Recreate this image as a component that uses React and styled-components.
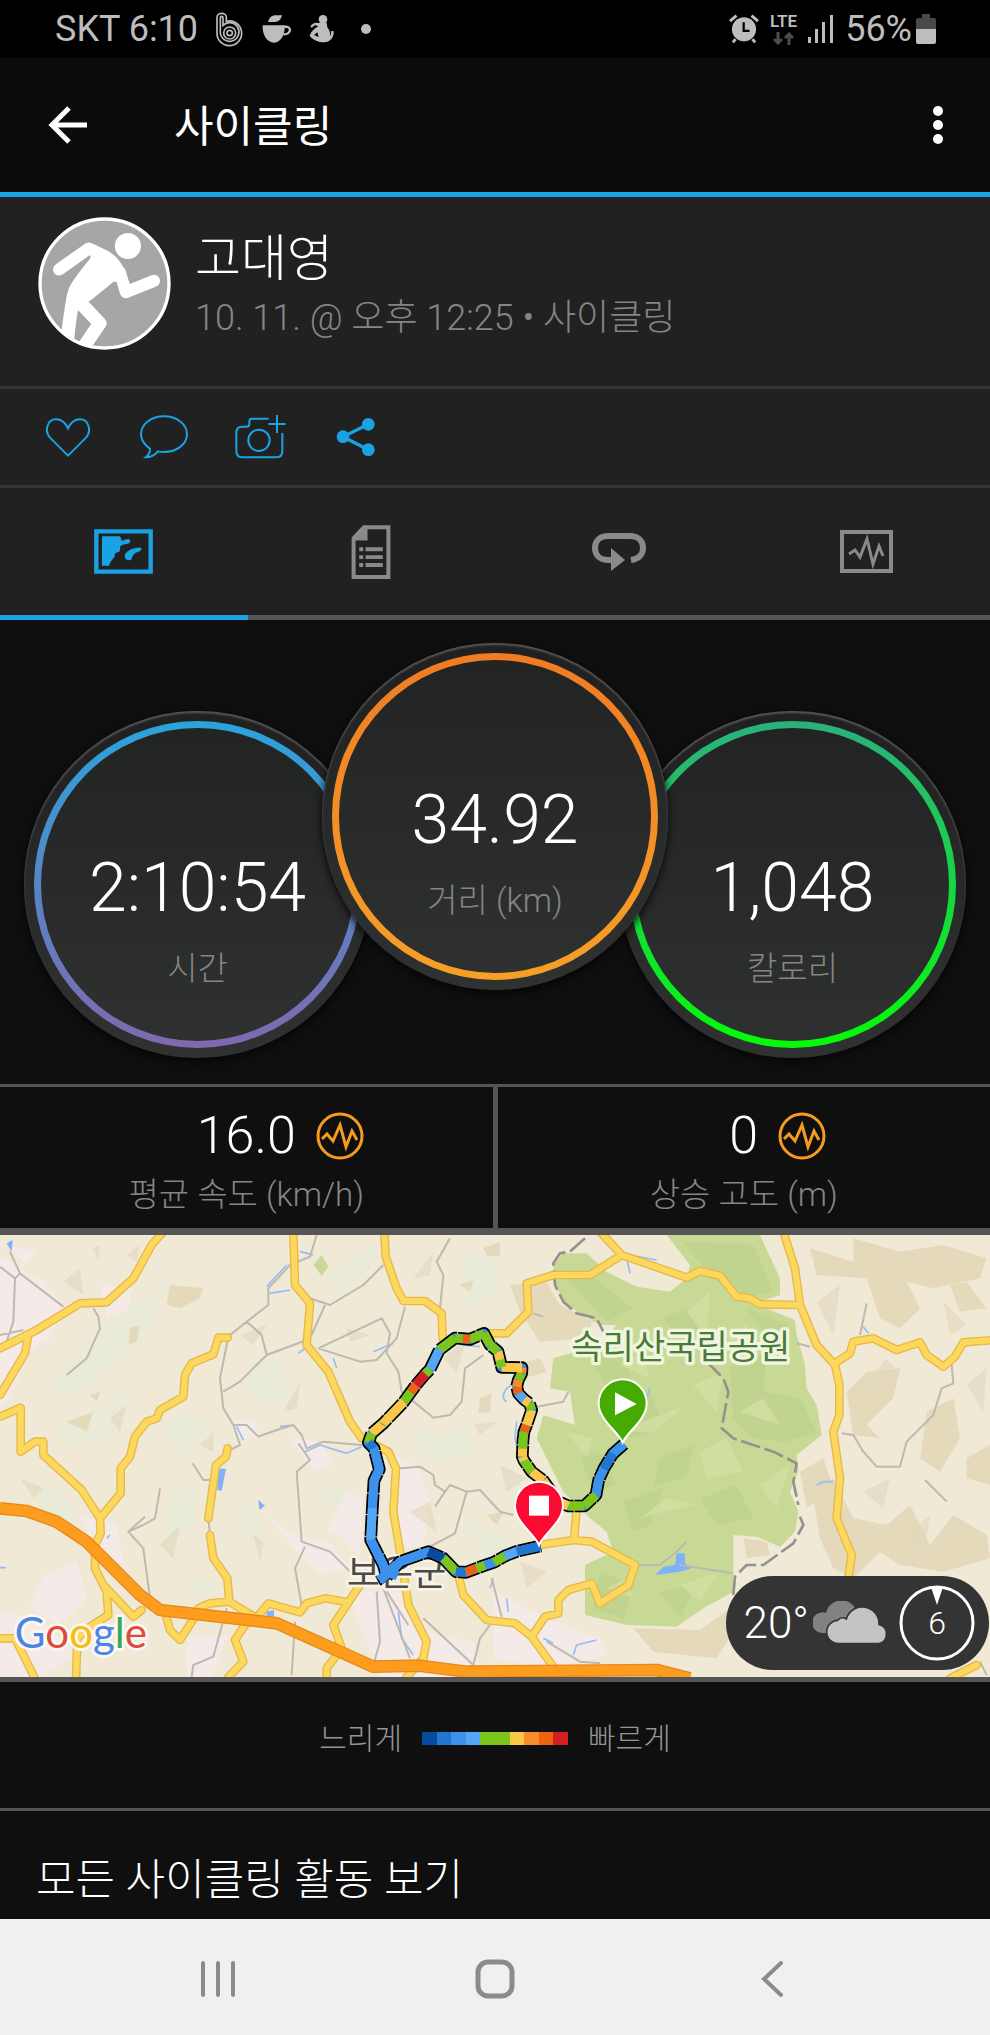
import React from "react"
import styled, { createGlobalStyle, css } from "styled-components"

const colors = {
  accent: "#1aa3e4",
  panel: "#212121",
  page: "#0f0f0f",
  line: "#363636",
  rule: "#555555",
  muted: "#858585",
  status: "#bdbdbd",
  orange: "#f49b21",
}

const GlobalStyle = createGlobalStyle`
  * {
    box-sizing: border-box;
  }
  body {
    margin: 0;
    background: ${colors.page};
    color: #fff;
    font-family: Roboto, "Noto Sans CJK KR", sans-serif;
    font-weight: 300;
  }
  button {
    display: flex;
    align-items: center;
    justify-content: center;
    padding: 0;
    border: 0;
    background: none;
    color: inherit;
    font: inherit;
  }
  svg {
    display: block;
    flex: none;
  }
  h1, h2, p, ul {
    margin: 0;
    padding: 0;
  }
`

const StatusBar = styled.div`
  display: flex;
  align-items: center;
  justify-content: space-between;
  height: 58px;
  padding: 0 54px 0 55px;
  background: #000;
  color: ${colors.status};
  font-size: 36px;
  font-weight: 400;
  line-height: 60px;
`

const StatusGroup = styled.div`
  display: flex;
  align-items: center;
  gap: ${props => props.$gap}px;
`

const Network = styled.span`
  display: flex;
  flex-direction: column;
  align-items: center;
  gap: 4px;
  font-size: 17px;
  font-weight: 600;
  line-height: 14px;
`

const Charge = styled.span`
  display: flex;
  align-items: center;
  gap: 4px;
`

const AppBar = styled.header`
  display: flex;
  align-items: center;
  height: 139px;
  padding: 0 44px;
  border-bottom: 5px solid ${colors.accent};
  background: #0b0b0b;
`

const Title = styled.h1`
  flex: 1;
  margin-left: 82px;
  padding-top: 3px;
  font-size: 43px;
  font-weight: 400;
  line-height: 60px;
`

const Profile = styled.section`
  display: flex;
  gap: 24px;
  height: 192px;
  padding: 20px 38px;
  border-bottom: 3px solid ${colors.line};
  background: ${colors.panel};
`

const ProfileText = styled.div`
  display: flex;
  flex-direction: column;
  gap: 2px;
  padding-top: 9px;
`

const Name = styled.h2`
  font-size: 50px;
  font-weight: 300;
  line-height: 66px;
`

const Meta = styled.p`
  color: ${colors.muted};
  font-size: 36px;
  line-height: 48px;
`

const Actions = styled.div`
  display: flex;
  align-items: center;
  gap: 44px;
  height: 99px;
  padding: 0 42px;
  border-bottom: 3px solid ${colors.line};
  background: ${colors.panel};
  color: ${colors.accent};
`

const Action = styled.button`
  width: 52px;
  height: 60px;
`

const Tabs = styled.div`
  display: flex;
  background: ${colors.panel};
`

const Tab = styled.button`
  && {
    flex: 1;
    height: 132px;
    border-bottom: 5px solid ${colors.rule};
    color: #8a8a8a;
    ${props => props.$active
      && css`
        border-bottom-color: ${colors.accent};
        color: ${colors.accent};
      `}
  }
`

const Dials = styled.section`
  display: flex;
  align-items: flex-end;
  justify-content: center;
  padding: 23px 0 26px;
`

const Dial = styled.div`
  position: relative;
  z-index: ${props => (props.$raised ? 1 : 0)};
  flex: 0 0 35%;
  margin: ${props => (props.$raised ? "0 -49px 68px" : "0")};
  padding: 10px;
  border-radius: 50%;
  background: linear-gradient(#202020, #303232);
  box-shadow: inset 0 2px 2px #5a5656, 0 3px 8px #050505;
`

const Ring = styled.div`
  padding: 7px;
  border-radius: 50%;
  background: linear-gradient(${props => props.$from}, ${props => props.$to});
`

const Face = styled.div`
  display: flex;
  flex-direction: column;
  align-items: center;
  gap: 20px;
  aspect-ratio: 1;
  padding-top: 38%;
  border-radius: 50%;
  background: linear-gradient(#222323, #2f3131);
`

const DialValue = styled.span`
  font-size: 68px;
  line-height: 82px;
`

const Label = styled.span`
  color: ${colors.muted};
  font-size: 33px;
  line-height: 40px;
`

const Stats = styled.section`
  display: flex;
  border-top: 3px solid ${colors.rule};
  border-bottom: 7px solid ${colors.rule};
`

const Stat = styled.div`
  display: flex;
  flex: 1;
  flex-direction: column;
  align-items: center;
  gap: 9px;
  height: 141px;
  padding-top: 19px;
  & + & {
    border-left: 5px solid ${colors.rule};
  }
`

const StatValue = styled.div`
  display: grid;
  grid-template-columns: 1fr auto 1fr;
  align-items: center;
  gap: 20px;
  width: 100%;
  font-size: 52px;
  line-height: 60px;
  svg {
    grid-column: 3;
  }
  span {
    grid-column: 2;
  }
`

const MapPanel = styled.section`
  position: relative;
  border-bottom: 5px solid ${colors.rule};
`

const MapSvg = styled.svg`
  width: 100%;
  height: auto;
`

const Weather = styled.div`
  position: absolute;
  right: 1px;
  bottom: 7px;
  display: flex;
  align-items: center;
  gap: 4px;
  height: 94px;
  padding: 0 14px 0 18px;
  border-radius: 47px;
  background: #343434;
  font-size: 44px;
  line-height: 60px;
`

const Wind = styled.span`
  display: grid;
  place-items: center;
  margin-left: 6px;
  font-size: 32px;
  svg, b {
    grid-area: 1 / 1;
  }
  b {
    font-weight: 300;
  }
`

const Legend = styled.section`
  display: flex;
  align-items: flex-start;
  justify-content: center;
  gap: 20px;
  height: 129px;
  padding-top: 37px;
  border-bottom: 3px solid ${colors.rule};
  color: #959595;
  font-size: 30px;
  line-height: 40px;
`

const Scale = styled.ul`
  display: flex;
  width: 146px;
  margin-top: 13px;
  list-style: none;
`

const Swatch = styled.li`
  flex: 1;
  height: 13px;
  background: ${props => props.$color};
`

const AllActivities = styled.a`
  display: block;
  height: 108px;
  padding: 39px 36px 9px;
  color: #fff;
  font-size: 43px;
  line-height: 60px;
  text-decoration: none;
`

const NavBar = styled.nav`
  display: grid;
  grid-template-columns: repeat(3, 1fr);
  height: 116px;
  padding: 5px 8% 0;
  background: #f0f0f0;
  color: #8b8b8b;
`

// status bar icons

const SwirlIcon = () => (
  <svg width="30" height="36" viewBox="643 32 90 108" fill="none" stroke="currentColor" strokeWidth="5">
    <path d="M649 98V51c0-16 28-16 28 0v12a37 37 0 1 1-28 35" />
    <path d="M659 98V52c0-5 8-5 8 0v23a28 28 0 1 1-8 23" />
    <circle cx="687" cy="98" r="18" />
    <circle cx="687" cy="98" r="8" />
  </svg>
)

const CupIcon = () => (
  <svg width="30" height="30" viewBox="784 42 90 90" fill="currentColor">
    <path d="M802 66c4-14 12-20 22-20h20c-4 14-10 20-22 20zM786 76h66c2 24-10 52-32 52s-36-26-34-52z" />
    <path d="M850 81c24-6 24 24-2 22" fill="none" stroke="currentColor" strokeWidth="7" />
  </svg>
)

const FigureIcon = () => (
  <svg width="26" height="30" viewBox="925 44 78 90" fill="currentColor">
    <circle cx="967" cy="60" r="13" />
    <path d="M958 70h20l2 14c8 10 10 20 8 26 4-2 4-8 3-14l8-1c2 18-10 34-30 34-16 0-34-8-42-20 4-12 14-22 26-28l-10-4-10 8-4-4c6-8 14-12 20-10zM940 107l14 6-4-14z" fillRule="evenodd" />
  </svg>
)

const AlarmIcon = () => (
  <svg width="30" height="30" viewBox="674 42 92 90">
    <circle cx="720" cy="88" r="37" fill="currentColor" />
    <path d="M677 63l20-17M763 63l-20-17M694 118l-8 10M746 118l8 10" stroke="currentColor" strokeWidth="9" />
    <path d="M719 66v27h18" fill="none" stroke="#000" strokeWidth="7" />
  </svg>
)

const DataIcon = () => (
  <svg width="21" height="13" viewBox="0 0 21 13" fill="none" stroke="#4c4c4c" strokeWidth="3">
    <path d="M5 0v11M1 7l4 4 4-4M16 13V2M12 6l4-4 4 4" />
  </svg>
)

const SignalIcon = () => (
  <svg width="26" height="28" viewBox="0 0 26 28" fill="currentColor">
    <path d="M0 22h3v6H0zM7 14h3v14H7zM14 7h3v21h-3zM22 0h3v28h-3z" />
  </svg>
)

const BatteryIcon = () => (
  <svg width="20" height="30" viewBox="0 0 20 30">
    <path d="M6 0h8v4h4q2 0 2 2v9H0V6q0-2 2-2h4z" fill="#4a4a4a" />
    <path d="M0 15h20v13q0 2-2 2H2q-2 0-2-2z" fill="currentColor" />
  </svg>
)

const Dot = () => (
  <svg width="10" height="10" viewBox="0 0 10 10" fill="currentColor">
    <circle cx="5" cy="5" r="5" />
  </svg>
)

// app icons

const BackIcon = () => (
  <svg width="48" height="48" viewBox="0 0 48 48" fill="none" stroke="#fff" strokeWidth="5">
    <path d="M43 24H9M25 7L8 24l17 17" />
  </svg>
)

const MoreIcon = () => (
  <svg width="16" height="40" viewBox="0 0 16 40" fill="#fff">
    <circle cx="8" cy="6" r="5" />
    <circle cx="8" cy="20" r="5" />
    <circle cx="8" cy="34" r="5" />
  </svg>
)

const Avatar = () => (
  <svg width="133" height="133" viewBox="115 50 398 398" role="img" aria-label="프로필">
    <clipPath id="avatarClip">
      <circle cx="314" cy="249" r="193" />
    </clipPath>
    <circle cx="314" cy="249" r="193" fill="#a6a6a6" />
    <g clipPath="url(#avatarClip)" fill="#fff" stroke="#fff" strokeLinecap="round" strokeLinejoin="round">
      <circle cx="384" cy="137" r="39" stroke="none" />
      <path d="M257 129q12-5 24 2l42 20q32 17 48 52 12 22 12 42l-42-1-66 54-50 30-28-10q2-40 16-66 20-32 60-80z" stroke="none" />
      <path d="M178 207l88-62M360 215l18 60 84-34" fill="none" strokeWidth="36" />
      <path d="M224 280q-14 60-20 130M240 305l60 63-48 70" fill="none" strokeWidth="40" />
    </g>
    <circle cx="314" cy="249" r="193" fill="none" stroke="#fff" strokeWidth="10" />
  </svg>
)

const HeartIcon = () => (
  <svg width="46" height="42" viewBox="133 645 138 126" fill="none" stroke="currentColor" strokeWidth="6">
    <path d="M202 764l-54-54c-18-20-8-55 18-55 18 0 28 10 36 27 8-17 18-27 36-27 26 0 36 35 18 55z" />
  </svg>
)

const CommentIcon = () => (
  <svg width="50" height="46" viewBox="416 641 150 138" fill="none" stroke="currentColor" strokeWidth="6">
    <path d="M449 745c-16-11-27-26-27-43 0-30 31-54 69-54s69 24 69 54-31 53-69 53c-6 0-12 0-18-2-10 12-22 18-37 18 8-6 13-14 13-26z" />
  </svg>
)

const CameraIcon = () => (
  <svg width="52" height="46" viewBox="704 646 156 138" fill="none" stroke="currentColor" strokeWidth="6">
    <path d="M808 660h-50q-8 0-8 8v8q0 8-8 8h-14q-17 0-17 17v57q0 18 18 18h102q18 0 18-18v-55M833 649v54M807 676h52" />
    <circle cx="779" cy="725" r="32" />
  </svg>
)

const ShareIcon = () => (
  <svg width="40" height="40" viewBox="1008 650 120 120" fill="currentColor" stroke="currentColor">
    <path d="M1105 672l-76 37 76 39" fill="none" strokeWidth="10" />
    <circle cx="1105" cy="672" r="19" stroke="none" />
    <circle cx="1029" cy="709" r="19" stroke="none" />
    <circle cx="1105" cy="748" r="19" stroke="none" />
  </svg>
)

const MapIcon = () => (
  <svg width="59" height="45" viewBox="284 988 177 135" fill="currentColor">
    <path d="M291 995h163v121H291z" fill="none" stroke="currentColor" strokeWidth="13" />
    <path d="M308 1010h54l6 14q18-10 24-4 4 10-10 13-14 0-20 8 2 8-2 15-12 2-14 8 2 8-4 12l-8 10q-4 4-4 12H308z" />
    <path d="M385 1055q10-9 25-10 17-5 17 5-7 6-17 9-12 7-14 21-16 5-20-8 1-12 9-17z" />
  </svg>
)

const DocIcon = () => (
  <svg width="40" height="54" viewBox="1054 974 119 163" fill="currentColor">
    <path d="M1061 1014v117h105V981h-74z" fill="none" stroke="currentColor" strokeWidth="12" />
    <path d="M1060 1014l32-34h11v41h-43zM1078 1041h12v12h-12zM1097 1041h52v12h-52zM1078 1065h12v12h-12zM1097 1065h52v12h-52zM1078 1089h12v12h-12zM1097 1089h52v12h-52z" />
  </svg>
)

const LapIcon = () => (
  <svg width="54" height="38" viewBox="592 538 54 38">
    <path d="M631 565c8-1 12-6 12-12 0-8-6-12-13-12h-22c-7 0-13 4-13 12s6 12 13 12h5" fill="none" stroke="currentColor" strokeWidth="6" />
    <path d="M611 553l14 12-14 11z" fill="currentColor" />
  </svg>
)

const ChartIcon = () => (
  <svg width="53" height="44" viewBox="840 530 53 44" fill="none" stroke="currentColor">
    <path d="M842 532h49v39h-49z" strokeWidth="4" />
    <path d="M849 554l6-4 5 7 7-18 6 25 6-18 4 10" strokeWidth="3" />
  </svg>
)

const PulseIcon = () => (
  <svg width="48" height="48" viewBox="315 1110 48 48" fill="none" stroke={colors.orange} strokeWidth="3">
    <circle cx="339" cy="1134" r="22" />
    <path d="M321 1137l5-5 6 7 7-16 6 22 6-16 5 9" />
  </svg>
)

const CloudIcon = () => (
  <svg width="76" height="44" viewBox="962 1124 228 132">
    <path d="M993 1220a31 31 0 1 1 8-60 48 48 0 0 1 92-6v66z" fill="#828282" />
    <path d="M1040 1252a34 34 0 0 1-4-70 20 20 0 0 1 26-4 50 50 0 0 1 98 16 30 30 0 0 1 0 58z" fill="#c4c4c4" stroke="#343434" strokeWidth="5" />
  </svg>
)

const CompassIcon = () => (
  <svg width="76" height="76" viewBox="0 0 76 76">
    <circle cx="38" cy="38" r="36" fill="none" stroke="#fff" strokeWidth="3" />
    <path d="M32 2h12l-6 18z" fill="#fff" />
  </svg>
)

// map data, three units to a pixel

const majorRoads = [
  "M490 20L455 60 400 160 320 232 240 235 110 315 0 370",
  "M85 330L75 385 0 510",
  "M880 20L885 180 930 235 920 360 985 440 1050 590 1085 640 1165 680 1188 730 1180 860 1205 1010 1225 1140 1280 1250 1270 1300 1220 1356",
  "M1153 20L1157 95 1190 190 1210 228 1275 228 1325 265 1328 340",
  "M683 338L655 338 640 388 575 415 555 450 550 515 480 555 470 580 440 590 405 635 390 695 362 730 362 805 300 880 302 925 285 960 285 1030 320 1100 325 1170 270 1205 232 1240 228 1360",
  "M0 575L62 548 62 680 105 650 130 650 130 690 245 795 300 880",
  "M683 670L678 695 648 720 625 880",
  "M630 930L640 1000 682 1060 688 1130 770 1180",
  "M595 1150L630 1135 688 1130",
  "M0 1240L45 1240 105 1360",
  "M310 1080L400 1175 425 1155",
  "M500 1180L510 1215 540 1245 595 1160",
  "M765 1185L805 1135 900 1162 920 1135 975 1120 1035 1130",
  "M1080 1080L1000 1200 1025 1270 980 1330 980 1360",
  "M735 1200L705 1245 730 1310 685 1356",
  "M1375 1050L1390 1110 1460 1185 1545 1195 1595 1235 1660 1325",
  "M1400 340L1460 325 1520 325 1585 260 1580 175 1660 150 1770 150 1865 90 2060 158 2100 138 2160 152 2210 215 2250 220 2280 238 2400 240",
  "M1800 20L1865 90",
  "M2350 20L2385 130 2400 240 2450 360 2505 420 2518 480 2518 570 2500 620 2520 760 2510 880 2555 990 2545 1060",
  "M2505 415L2550 385 2560 350 2620 340 2690 375 2760 352 2780 390 2830 425 2865 395 2890 352 2980 345",
  "M1730 850L1722 945 1775 950 1905 1020 1885 1080 1800 1135 1775 1075 1705 1095 1675 1125 1675 1165 1635 1175 1595 1235",
  "M1722 945L1620 960",
  "M2930 1320L2850 1360",
]

const highway = "M0 850L80 858 170 890 260 950 420 1110 480 1155 830 1195 1120 1325 1260 1322 1400 1340 1970 1335 2070 1360"

const minorRoads = [
  "M0 125L45 160 60 145 190 245M60 145L30 80M45 160L40 290 20 350M200 450L260 400 300 310 295 275 280 250M0 330L70 315",
  "M690 330L740 290 805 240 805 190 870 120 930 95 950 30M740 290L785 330 800 390 720 470 670 500M800 390L920 345",
  "M683 345L660 460 670 550 700 600 740 600 775 635 830 615 880 600 905 630 920 670 970 650 1085 660M700 600L720 660 680 680",
  "M900 210L990 240 1090 180 1150 120M975 240L935 330M955 370L1145 280 1170 325 1160 385 1195 440 1205 500 1300 578 1350 570 1385 530 1395 430 1450 390",
  "M955 370L1080 410 1130 405 1190 340 1215 245M1320 250L1330 150 1310 110 1350 40",
  "M895 655L930 705 890 740 905 950 990 980 1050 1040M915 965L885 1030 905 1140M578 715L610 765 630 765",
  "M480 790L465 880 430 900 385 920 430 970 450 1120M435 875L385 920M625 880L630 930",
  "M680 1150L640 1295 580 1320 575 1356M885 1190L875 1350M1200 730L1260 725 1300 750 1305 780 1335 800 1305 845M1335 800L1350 780 1400 800 1365 925 1290 965M1400 800L1440 795 1500 860 1540 870",
  "M1130 1100L1140 1250 1120 1320M1150 1090L1230 1300M1270 1180L1420 1320M1160 1100L1225 1200M1475 1060L1505 1175",
  "M1610 545L1690 530 1705 500M1915 1020L1980 1020 2030 980 2060 950M2040 1020L2200 1045",
  "M2525 625L2560 630 2590 680 2630 725 2700 725 2720 650 2800 570 2825 490 2860 475 2855 420M2775 765L2840 830M2580 330L2600 235M2390 355L2430 365M1600 265L1630 275",
  "M1640 1250L1740 1310 1800 1315M2940 1310L2960 1350M1420 1320L1440 1240 1470 1200",
]

const parkBorder = "M1755 40L1710 80 1680 85 1660 115 1665 180 1690 230 1730 265 1790 280 1810 320M2120 410L2170 460 2185 500 2165 610 2200 640 2320 680 2390 715 2380 770 2395 840M2400 875L2410 900 2380 955 2290 1020 2240 1020 2205 1055 2200 1110"

const pinkAreas = "M0 90L60 130 130 170 190 240 150 340 90 380 30 520 0 540zM300 180L400 190 380 260 320 280zM20 60L110 80 80 120zM690 590L760 580 780 640 710 640zM870 640L960 650 1000 720 940 740zM800 870L880 930 1000 960 1050 1030 960 1050 900 990zM1180 690L1250 720 1290 830 1270 960 1200 970zM1040 800L1090 820 1080 1000 1020 930 980 920zM240 870L350 900 370 1010 310 1020zM130 1050L230 1010 260 1120 180 1200 90 1150zM0 1160L120 1180 230 1290 120 1356 0 1356zM1040 1100L1200 1100 1300 1230 1420 1250 1450 1356 1140 1356zM1480 1100L1640 1180 1800 1240 1820 1290 1660 1330 1480 1300zM560 1240L680 1230 640 1356 560 1356z"

const hazeAreas = "M150 460L300 300 400 250 520 130 440 330 330 420 210 520zM160 600L300 560 380 480 330 640 200 660zM480 620L560 560 640 600 560 700zM740 420L840 400 870 520 760 540zM980 150L1130 60 1110 130 1010 210zM1220 600L1330 640 1400 590 1420 680 1290 720zM100 770L210 820 230 900 130 860zM510 800L590 780 580 900 500 960zM700 800L770 860 800 980 720 900zM940 820L1010 760 1060 860zM1400 880L1540 960 1450 1000zM560 1040L650 1080 600 1120zM1380 100L1490 60 1500 200 1400 250z"

const tanAreas = "M510 180L610 190 600 220 540 250 500 240zM390 310L420 300 410 350 385 360zM200 590L280 560 260 620zM270 510L300 500 290 530zM1450 70L1500 50 1500 95 1460 90zM1440 520L1475 505 1470 560 1435 565zM1460 870L1510 860 1490 900zM1380 180L1420 165 1410 200zM1530 180L1640 170 1680 240 1780 290 1750 340 1620 350 1560 260zM1540 420L1620 400 1640 440 1570 460zM2430 70L2560 110 2560 40 2700 80 2830 60 2960 100 2940 160 2800 190 2720 170 2760 250 2700 310 2640 280 2600 160 2450 150zM2850 180L2900 170 2960 250 2880 260zM2540 500L2600 440 2700 430 2680 520 2600 600 2640 640 2560 630zM2440 820L2500 760 2560 880 2660 900 2730 840 2790 960 2860 870 2960 930 2970 1000 2830 1040 2700 1020 2640 980 2560 1060 2500 1030 2460 940zM2780 560L2860 520 2880 640 2820 740 2760 700zM2400 740L2470 700 2500 790 2420 850zM1900 1210L2100 1215 2190 1150 2200 1220 2150 1300 1960 1280zM2230 940L2300 950 2310 990 2240 1000zM2680 100L2740 90 2730 140zM2900 700L2970 660 2970 780 2900 760z"

const shards = "M60 760L130 790 100 820zM190 170L240 130 250 210zM380 90L420 60 410 110zM720 330L800 300 760 360zM850 560L900 470 890 550zM1040 310L1110 330 1050 350zM330 580L380 540 360 620zM600 660L640 620 640 680zM480 960L540 900 520 1000zM760 930L790 950 780 1010zM280 70L300 60 295 110zM1240 160L1300 80 1290 150zM1330 400L1400 340 1370 440zM1420 600L1490 590 1440 630zM1230 860L1290 830 1310 920zM2450 230L2520 180 2500 330zM2600 470L2660 400 2700 450zM2480 1120L2540 1080 2520 1180zM2590 800L2670 760 2650 850zM2830 230L2900 300 2850 330zM2900 480L2960 430 2950 560zM1560 1010L1640 1040 1580 1090zM1500 720L1580 760 1520 800zM2720 930L2790 870 2770 1000z"

const park = "M2000 30L2280 30 2340 160 2340 210 2260 235 2385 285 2390 330 2415 420 2420 490 2450 540 2465 630 2390 690 2395 740 2370 800 2395 860 2385 920 2340 965 2270 935 2200 930 2200 1100 2110 1150 2030 1205 1880 1200 1755 1170 1755 1020 1840 980 1820 920 1770 880 1690 800 1660 740 1610 640 1630 570 1725 600 1710 500 1650 490 1660 400 1800 360 1850 300 1800 300 1700 240 1665 180 1660 120 1690 85 1760 85 1820 140 1910 185 2010 200 2060 160 2070 120z"

const parkDark = "M2050 50L2260 60 2320 200 2210 220 2120 140zM1680 140L1770 150 1900 250 1820 290zM2190 430L2300 380 2290 500 2400 520 2450 620 2360 650 2260 640 2200 580zM1770 400L1850 360 1900 470 1830 500zM1990 280L2060 250 2110 340 2030 330zM1830 540L1950 500 1990 600 1890 640zM1980 700L2080 660 2060 760 1960 780zM1740 700L1800 680 1850 780 1780 800zM1870 830L1990 790 1950 900 1900 920zM2100 820L2210 780 2260 880 2150 900zM1800 1040L1900 1080 1870 1180 1780 1150zM1980 1100L2090 1080 2040 1180zM2240 250L2370 300 2300 340z"

const parkLight = "M1850 620L2060 540 1960 620zM2080 480L2170 440 2150 560zM1920 880L2000 820 2090 840 1990 860zM2220 560L2290 520 2340 600zM1700 620L1780 640 1760 700zM2060 260L2130 200 2120 330zM2100 680L2180 640 2230 740 2120 760zM1860 420L1930 380 1950 460zM2280 780L2370 720 2330 850zM2040 1080L2160 1040 2100 1130zM2180 340L2240 300 2250 380zM1820 1090L1880 1060 1900 1120z"

const streams = "M800 185L860 120M810 205L870 195M900 80L940 90M895 385L915 370M710 605L730 645M840 605L880 600M915 680L960 660 1040 685 1085 665M1010 430L1000 400M1120 380L1180 355M320 940L330 930M0 1028L18 1028M1195 1160L1205 1240 1240 1290M1385 360L1440 365M1520 530Q1500 520 1520 490L1550 470M1550 590L1545 640 1560 700M1890 90L1970 105M1880 100L1890 145M2450 780L2470 770 2500 770M2590 305L2605 325M1520 1120L1525 1160M1630 1240L1660 1255M1720 1290L1730 1260 1790 1245M1950 490L1940 520M1470 1090L1480 1060"

const lakes = "M20 55L38 45 35 80zM655 730L678 732 665 798 652 795zM775 825L795 842 778 855zM800 1160L822 1155 822 1178 800 1178zM1965 1050L1990 1025 2025 1020 2030 985 2055 985 2055 1015 2075 1030 2040 1040z"

const speeds = {
  navy: "#064ba0",
  blue: "#2176cf",
  azure: "#3d91ea",
  sky: "#55a6f7",
  green: "#7cc61b",
  yellow: "#fac748",
  amber: "#f78c2b",
  orange: "#ec6412",
  red: "#d31f1f",
}

const legend = ["navy", "blue", "azure", "sky", "green", "green", "yellow", "amber", "orange", "red"]

// each stop: x, y and the speed of the stretch that leads to it
const route = [
  [852, 402], [818, 432, "azure"], [792, 475, "blue"], [776, 510, "azure"], [768, 555, "azure"], [733, 588, "green"],
  [685, 588, "green"], [655, 575, "yellow"], [610, 512, "yellow"], [575, 485, "yellow"], [552, 452, "green"],
  [547, 440, "yellow"], [548, 415, "yellow"], [549, 390, "green"], [552, 365, "green"], [560, 345, "orange"],
  [575, 300, "yellow"], [568, 280, "green"], [552, 268, "yellow"], [535, 250, "sky"], [530, 230, "orange"],
  [535, 210, "amber"], [545, 190, "green"], [546, 173, "amber"], [485, 172, "yellow"], [480, 150, "green"],
  [474, 125, "yellow"], [450, 105, "green"], [432, 70, "green"], [390, 88, "green"], [368, 86, "orange"],
  [345, 84, "green"], [298, 120, "green"], [270, 178, "sky"], [256, 192, "green"], [228, 225, "red"],
  [212, 247, "orange"], [192, 275, "green"], [130, 340, "yellow"], [95, 370, "yellow"], [85, 398, "green"],
  [102, 415, "blue"], [118, 478, "azure"], [102, 512, "azure"], [97, 595, "azure"], [92, 690, "sky"],
  [130, 765, "azure"], [140, 800, "azure"], [180, 755, "azure"], [265, 725, "azure"], [310, 745, "navy"],
  [348, 785, "green"], [378, 787, "blue"], [410, 775, "orange"], [435, 766, "green"], [462, 757, "azure"],
  [495, 738, "green"], [530, 724, "sky"], [602, 708, "blue"],
]

const Route = () => (
  <g transform="translate(1020 255)" fill="none" strokeLinejoin="round">
    <path d={`M${route.map(([x, y]) => `${x} ${y}`).join("L")}`} stroke="#000" strokeWidth="38" strokeDasharray="62 3" />
    <path d={`M${route.map(([x, y]) => `${x} ${y}`).join("L")}`} stroke={speeds.azure} strokeWidth="27" />
    {route.slice(1).map(([x, y, speed], i) => (
      <path key={`${x}-${y}`} d={`M${route[i][0]} ${route[i][1]}L${x} ${y}`} stroke={speeds[speed]} strokeWidth="27" />
    ))}
    <path d="M108 798l14 26 54-40" stroke="#000" strokeWidth="5" />
    <path d="M118 812l52-48M128 775l45 22" stroke={speeds.azure} strokeWidth="30" />
    <path d="M120 338l14 10M784 470l24 16M800 448l22 18M815 428l20 18" stroke="#1c5ea8" strokeWidth="2" />
  </g>
)

const Pin = ({ x, y, color, children }) => (
  <g transform={`translate(${x} ${y})`}>
    <path d="M0 118C-14 84-72 50-72 0a72 72 0 0 1 144 0c0 50-58 84-72 118z" fill={color} stroke="#fff" strokeWidth="6" />
    {children}
  </g>
)

const ActivityMap = () => (
  <MapSvg viewBox="0 30 2970 1326" role="img" aria-label="경로 지도">
    <path d="M0 30h2970v1326H0z" fill="#efe9d6" />
    <path d={hazeAreas} fill="#e9ead8" />
    <path d={pinkAreas} fill="#f4ebe9" />
    <path d={tanAreas} fill="#e5d9bc" />
    <path d={park} fill="#c8d996" />
    <path d={parkDark} fill="#bdd28b" opacity="0.7" />
    <path d={parkLight} fill="#d2e0a3" opacity="0.8" />
    <path d="M965 90L985 125 965 152 940 120z" fill="#c8d99a" />
    <path d={shards} fill="#dfd7ba" opacity="0.6" />
    <path d={lakes} fill="#82b1fb" />
    <g fill="none" strokeLinejoin="round">
      <path d={streams} stroke="#94bdf6" strokeWidth="5" />
      <path d={minorRoads.join("")} stroke="#bdb9b0" strokeWidth="6" />
      <path d={parkBorder} stroke="#96918f" strokeWidth="8" strokeDasharray="60 14" />
      <path d={majorRoads.join("")} stroke="#e5b949" strokeWidth="26" strokeLinecap="round" />
      <path d={majorRoads.join("")} stroke="#fdd85d" strokeWidth="18" strokeLinecap="round" />
      <path d={highway} stroke="#e8891a" strokeWidth="38" />
      <path d={highway} stroke="#fe9c1e" strokeWidth="30" />
    </g>
    <g fontFamily='"Noto Sans CJK KR", sans-serif' fontWeight="400" paintOrder="stroke" strokeLinejoin="round">
      <text x="1714" y="402" fontSize="102" fill="#4a7a3a" stroke="#f0f5df" strokeWidth="20">속리산국립공원</text>
      <text x="1041" y="1083" fontSize="108" fill="#4b4a45" stroke="#f7f3e8" strokeWidth="16">보은군</text>
    </g>
    <Route />
    <Pin x={1868} y={535} color="#46ab00">
      <path d="M-23-33L42 2-23 36z" fill="#fff" />
    </Pin>
    <Pin x={1617} y={842} color="#fb0a32">
      <path d="M-30-30h60v60h-60z" fill="#fff" />
    </Pin>
    <text x="44" y="1270" fontFamily="Lato, sans-serif" fontSize="126" fontWeight="400" stroke="#fbf8f1" strokeWidth="16" strokeLinejoin="round" paintOrder="stroke">
      <tspan fill="#4a86e8">G</tspan>
      <tspan fill="#dd4b3e">o</tspan>
      <tspan fill="#f5bb16">o</tspan>
      <tspan fill="#4a86e8">g</tspan>
      <tspan fill="#3aa757">l</tspan>
      <tspan fill="#dd4b3e">e</tspan>
    </text>
  </MapSvg>
)

const actions = [
  { label: "좋아요", Icon: HeartIcon },
  { label: "댓글", Icon: CommentIcon },
  { label: "사진 추가", Icon: CameraIcon },
  { label: "공유", Icon: ShareIcon },
]

const tabs = [
  { label: "지도", Icon: MapIcon },
  { label: "상세", Icon: DocIcon },
  { label: "랩", Icon: LapIcon },
  { label: "차트", Icon: ChartIcon },
]

const dials = [
  { value: "2:10:54", label: "시간", from: "#2ba3dc", to: "#8168ae" },
  { value: "34.92", label: "거리 (km)", from: "#f07b24", to: "#f6a025", raised: true },
  { value: "1,048", label: "칼로리", from: "#2bb07d", to: "#04fb08" },
]

const stats = [
  { value: "16.0", label: "평균 속도 (km/h)" },
  { value: "0", label: "상승 고도 (m)" },
]

class App extends React.Component {
  state = {
    activeTab: "지도",
  }

  changeActiveTab = (tab) => {
    this.setState({ activeTab: tab })
  }

  render() {
    const { activeTab } = this.state
    return (
      <>
        <GlobalStyle />
        <StatusBar>
          <StatusGroup $gap={17}>
            <span>SKT 6:10</span>
            <SwirlIcon />
            <CupIcon />
            <FigureIcon />
            <StatusGroup $gap={0}>
              &nbsp;
              <Dot />
            </StatusGroup>
          </StatusGroup>
          <StatusGroup $gap={11}>
            <AlarmIcon />
            <Network>
              LTE
              <DataIcon />
            </Network>
            <SignalIcon />
            <Charge>
              56%
              <BatteryIcon />
            </Charge>
          </StatusGroup>
        </StatusBar>
        <AppBar>
          <button type="button" aria-label="뒤로">
            <BackIcon />
          </button>
          <Title>사이클링</Title>
          <button type="button" aria-label="더보기">
            <MoreIcon />
          </button>
        </AppBar>
        <Profile>
          <Avatar />
          <ProfileText>
            <Name>고대영</Name>
            <Meta>10. 11. @ 오후 12:25 • 사이클링</Meta>
          </ProfileText>
        </Profile>
        <Actions>
          {actions.map(({ label, Icon }) => (
            <Action key={label} type="button" aria-label={label}>
              <Icon />
            </Action>
          ))}
        </Actions>
        <Tabs role="tablist">
          {tabs.map(({ label, Icon }) => (
            <Tab
              key={label}
              type="button"
              role="tab"
              aria-label={label}
              aria-selected={activeTab === label}
              $active={activeTab === label}
              onClick={() => this.changeActiveTab(label)}
            >
              <Icon />
            </Tab>
          ))}
        </Tabs>
        <Dials>
          {dials.map(dial => (
            <Dial key={dial.label} $raised={dial.raised}>
              <Ring $from={dial.from} $to={dial.to}>
                <Face>
                  <DialValue>{dial.value}</DialValue>
                  <Label>{dial.label}</Label>
                </Face>
              </Ring>
            </Dial>
          ))}
        </Dials>
        <Stats>
          {stats.map(stat => (
            <Stat key={stat.label}>
              <StatValue>
                <span>{stat.value}</span>
                <PulseIcon />
              </StatValue>
              <Label>{stat.label}</Label>
            </Stat>
          ))}
        </Stats>
        <MapPanel>
          <ActivityMap />
          <Weather>
            20°
            <CloudIcon />
            <Wind>
              <CompassIcon />
              <b>6</b>
            </Wind>
          </Weather>
        </MapPanel>
        <Legend>
          <span>느리게</span>
          <Scale>
            {legend.map((speed, i) => (
              <Swatch key={`${speed}${i}`} $color={speeds[speed]} />
            ))}
          </Scale>
          <span>빠르게</span>
        </Legend>
        <AllActivities href="#activities">모든 사이클링 활동 보기</AllActivities>
        <NavBar>
          <button type="button" aria-label="최근 앱">
            <svg width="36" height="38" viewBox="0 0 36 38" stroke="currentColor" strokeWidth="4" strokeLinecap="round">
              <path d="M3 3v32M18 3v32M33 3v32" />
            </svg>
          </button>
          <button type="button" aria-label="홈">
            <svg width="40" height="40" viewBox="0 0 40 40" fill="none" stroke="currentColor" strokeWidth="5">
              <rect x="3" y="3" width="34" height="34" rx="10" />
            </svg>
          </button>
          <button type="button" aria-label="이전">
            <svg width="24" height="38" viewBox="0 0 24 38" fill="none" stroke="currentColor" strokeWidth="4" strokeLinecap="round">
              <path d="M21 3L4 19l17 16" />
            </svg>
          </button>
        </NavBar>
      </>
    )
  }
}

export default App
